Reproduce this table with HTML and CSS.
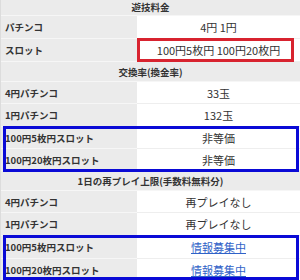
FILE: index.html
```html
<!DOCTYPE html>
<html lang="ja">
<head>
<meta charset="utf-8">
<link rel="stylesheet" href="styles.css">
</head>
<body>
<div class="sheet">
  <div class="head first">遊技料金</div>
  <div class="row tall"><div class="label">パチンコ</div><div class="value">4円 1円</div></div>
  <div class="row tall"><div class="label">スロット</div><div class="value">100円5枚円 100円20枚円</div></div>
  <div class="head">交換率(換金率)</div>
  <div class="row"><div class="label">4円パチンコ</div><div class="value">33玉</div></div>
  <div class="row tall"><div class="label">1円パチンコ</div><div class="value">132玉</div></div>
  <div class="row"><div class="label">100円5枚円スロット</div><div class="value">非等価</div></div>
  <div class="row"><div class="label">100円20枚円スロット</div><div class="value">非等価</div></div>
  <div class="head">1日の再プレイ上限(手数料無料分)</div>
  <div class="row"><div class="label">4円パチンコ</div><div class="value">再プレイなし</div></div>
  <div class="row tall"><div class="label">1円パチンコ</div><div class="value">再プレイなし</div></div>
  <div class="row tall"><div class="label">100円5枚円スロット</div><div class="value"><a class="link" href="#">情報募集中</a></div></div>
  <div class="row"><div class="label">100円20枚円スロット</div><div class="value"><a class="link" href="#">情報募集中</a></div></div>

  <div class="mark red"></div>
  <div class="mark blue one"></div>
  <div class="mark blue two"></div>
</div>
</body>
</html>
```
FILE: styles.css
```css
html, body {
  margin: 0;
  padding: 0;
  background: #ffffff;
}
.sheet {
  position: relative;
  width: 300px;
  height: 280px;
  overflow: hidden;
  font-family: "Noto Sans CJK JP", "Noto Sans", sans-serif;
  color: #333333;
  border-left: 1px solid #dcdcdc;
  box-sizing: border-box;
}
.head {
  height: 20px;
  display: flex;
  align-items: center;
  justify-content: center;
  background: #ebebeb;
  font-size: 9.5px;
  font-weight: bold;
  border-bottom: 1px solid #f6f6f6;
  box-sizing: border-box;
}
.head.first {
  height: 16px;
  padding-bottom: 2px;
}
.row {
  display: grid;
  grid-template-columns: 136px 1fr;
  height: 22px;
}
.row.tall {
  height: 23px;
}
.label {
  display: flex;
  align-items: center;
  padding-left: 4px;
  background: #ebebeb;
  font-size: 9.5px;
  font-weight: bold;
  border-bottom: 1px solid #f6f6f6;
  white-space: nowrap;
}
.value {
  display: flex;
  align-items: center;
  justify-content: center;
  font-size: 11px;
  border-bottom: 1px solid #eeeeee;
  white-space: nowrap;
}
.link {
  color: #2f62c8;
  text-decoration: underline;
}
.mark {
  position: absolute;
  box-sizing: border-box;
  pointer-events: none;
}
.red {
  left: 136px;
  top: 38px;
  width: 157px;
  height: 24px;
  border: 3px solid #d8232f;
}
.blue {
  left: 2px;
  width: 296px;
  border: 3px solid #0a0ad6;
}
.blue.one {
  top: 126px;
  height: 46px;
}
.blue.two {
  top: 235px;
  height: 45px;
}
```
